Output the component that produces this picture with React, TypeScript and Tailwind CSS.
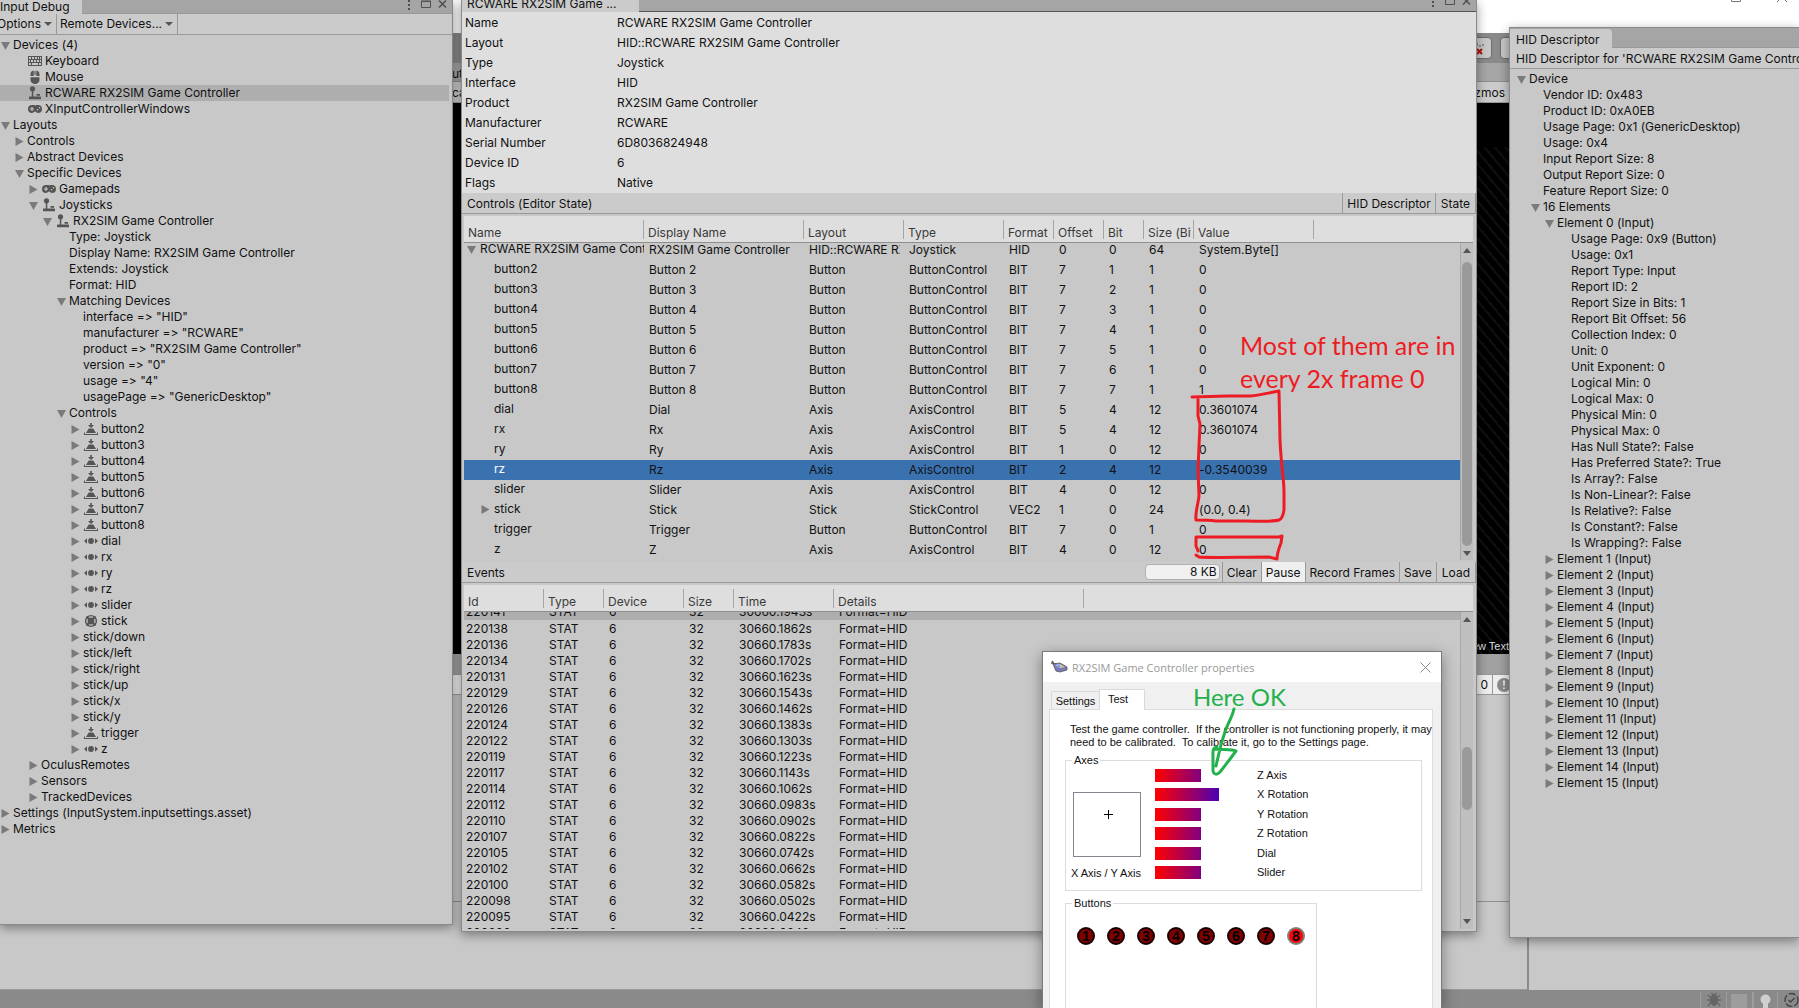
import React from 'react';
import clsx from 'clsx';

type IconName = 'keyboard' | 'mouse' | 'joystick' | 'gamepad' | 'button' | 'axis' | 'stick';

interface TreeItem {
  depth: number;
  label: string;
  fold?: 'open' | 'closed';
  icon?: IconName;
  selected?: boolean;
}

interface Column {
  title: string;
  width: number;
}

const deviceTree: TreeItem[] = [
  { depth: 0, label: 'Devices (4)', fold: 'open' },
  { depth: 1, label: 'Keyboard', icon: 'keyboard' },
  { depth: 1, label: 'Mouse', icon: 'mouse' },
  { depth: 1, label: 'RCWARE RX2SIM Game Controller', icon: 'joystick', selected: true },
  { depth: 1, label: 'XInputControllerWindows', icon: 'gamepad' },
  { depth: 0, label: 'Layouts', fold: 'open' },
  { depth: 1, label: 'Controls', fold: 'closed' },
  { depth: 1, label: 'Abstract Devices', fold: 'closed' },
  { depth: 1, label: 'Specific Devices', fold: 'open' },
  { depth: 2, label: 'Gamepads', fold: 'closed', icon: 'gamepad' },
  { depth: 2, label: 'Joysticks', fold: 'open', icon: 'joystick' },
  { depth: 3, label: 'RX2SIM Game Controller', fold: 'open', icon: 'joystick' },
  { depth: 4, label: 'Type: Joystick' },
  { depth: 4, label: 'Display Name: RX2SIM Game Controller' },
  { depth: 4, label: 'Extends: Joystick' },
  { depth: 4, label: 'Format: HID' },
  { depth: 4, label: 'Matching Devices', fold: 'open' },
  { depth: 5, label: 'interface => "HID"' },
  { depth: 5, label: 'manufacturer => "RCWARE"' },
  { depth: 5, label: 'product => "RX2SIM Game Controller"' },
  { depth: 5, label: 'version => "0"' },
  { depth: 5, label: 'usage => "4"' },
  { depth: 5, label: 'usagePage => "GenericDesktop"' },
  { depth: 4, label: 'Controls', fold: 'open' },
  ...[2, 3, 4, 5, 6, 7, 8].map((n): TreeItem => ({ depth: 5, label: `button${n}`, fold: 'closed', icon: 'button' })),
  ...['dial', 'rx', 'ry', 'rz', 'slider'].map((label): TreeItem => ({ depth: 5, label, fold: 'closed', icon: 'axis' })),
  { depth: 5, label: 'stick', fold: 'closed', icon: 'stick' },
  ...['down', 'left', 'right', 'up', 'x', 'y'].map((d): TreeItem => ({ depth: 5, label: `stick/${d}`, fold: 'closed' })),
  { depth: 5, label: 'trigger', fold: 'closed', icon: 'button' },
  { depth: 5, label: 'z', fold: 'closed', icon: 'axis' },
  { depth: 2, label: 'OculusRemotes', fold: 'closed' },
  { depth: 2, label: 'Sensors', fold: 'closed' },
  { depth: 2, label: 'TrackedDevices', fold: 'closed' },
  { depth: 0, label: 'Settings (InputSystem.inputsettings.asset)', fold: 'closed' },
  { depth: 0, label: 'Metrics', fold: 'closed' },
];

const hidTree: TreeItem[] = [
  { depth: 0, label: 'Device', fold: 'open' },
  ...[
    'Vendor ID: 0x483',
    'Product ID: 0xA0EB',
    'Usage Page: 0x1 (GenericDesktop)',
    'Usage: 0x4',
    'Input Report Size: 8',
    'Output Report Size: 0',
    'Feature Report Size: 0',
  ].map((label): TreeItem => ({ depth: 1, label })),
  { depth: 1, label: '16 Elements', fold: 'open' },
  { depth: 2, label: 'Element 0 (Input)', fold: 'open' },
  ...[
    'Usage Page: 0x9 (Button)',
    'Usage: 0x1',
    'Report Type: Input',
    'Report ID: 2',
    'Report Size in Bits: 1',
    'Report Bit Offset: 56',
    'Collection Index: 0',
    'Unit: 0',
    'Unit Exponent: 0',
    'Logical Min: 0',
    'Logical Max: 0',
    'Physical Min: 0',
    'Physical Max: 0',
    'Has Null State?: False',
    'Has Preferred State?: True',
    'Is Array?: False',
    'Is Non-Linear?: False',
    'Is Relative?: False',
    'Is Constant?: False',
    'Is Wrapping?: False',
  ].map((label): TreeItem => ({ depth: 3, label })),
  ...Array.from({ length: 15 }, (_, i): TreeItem => ({ depth: 2, label: `Element ${i + 1} (Input)`, fold: 'closed' })),
];

const deviceInfo = [
  ['Name', 'RCWARE RX2SIM Game Controller'],
  ['Layout', 'HID::RCWARE RX2SIM Game Controller'],
  ['Type', 'Joystick'],
  ['Interface', 'HID'],
  ['Product', 'RX2SIM Game Controller'],
  ['Manufacturer', 'RCWARE'],
  ['Serial Number', '6D8036824948'],
  ['Device ID', '6'],
  ['Flags', 'Native'],
];

const controlColumns: Column[] = [
  { title: 'Name', width: 180 },
  { title: 'Display Name', width: 160 },
  { title: 'Layout', width: 100 },
  { title: 'Type', width: 100 },
  { title: 'Format', width: 50 },
  { title: 'Offset', width: 50 },
  { title: 'Bit', width: 40 },
  { title: 'Size (Bits)', width: 50 },
  { title: 'Value', width: 120 },
];

const controlRows = [
  ['RCWARE RX2SIM Game Controller', 'RX2SIM Game Controller', 'HID::RCWARE RX2SIM', 'Joystick', 'HID', '0', '0', '64', 'System.Byte[]'],
  ['button2', 'Button 2', 'Button', 'ButtonControl', 'BIT', '7', '1', '1', '0'],
  ['button3', 'Button 3', 'Button', 'ButtonControl', 'BIT', '7', '2', '1', '0'],
  ['button4', 'Button 4', 'Button', 'ButtonControl', 'BIT', '7', '3', '1', '0'],
  ['button5', 'Button 5', 'Button', 'ButtonControl', 'BIT', '7', '4', '1', '0'],
  ['button6', 'Button 6', 'Button', 'ButtonControl', 'BIT', '7', '5', '1', '0'],
  ['button7', 'Button 7', 'Button', 'ButtonControl', 'BIT', '7', '6', '1', '0'],
  ['button8', 'Button 8', 'Button', 'ButtonControl', 'BIT', '7', '7', '1', '1'],
  ['dial', 'Dial', 'Axis', 'AxisControl', 'BIT', '5', '4', '12', '0.3601074'],
  ['rx', 'Rx', 'Axis', 'AxisControl', 'BIT', '5', '4', '12', '0.3601074'],
  ['ry', 'Ry', 'Axis', 'AxisControl', 'BIT', '1', '0', '12', '0'],
  ['rz', 'Rz', 'Axis', 'AxisControl', 'BIT', '2', '4', '12', '-0.3540039'],
  ['slider', 'Slider', 'Axis', 'AxisControl', 'BIT', '4', '0', '12', '0'],
  ['stick', 'Stick', 'Stick', 'StickControl', 'VEC2', '1', '0', '24', '(0.0, 0.4)'],
  ['trigger', 'Trigger', 'Button', 'ButtonControl', 'BIT', '7', '0', '1', '0'],
  ['z', 'Z', 'Axis', 'AxisControl', 'BIT', '4', '0', '12', '0'],
];

const eventColumns: Column[] = [
  { title: 'Id', width: 80 },
  { title: 'Type', width: 60 },
  { title: 'Device', width: 80 },
  { title: 'Size', width: 50 },
  { title: 'Time', width: 100 },
  { title: 'Details', width: 250 },
];

const events = [
  ['220141', '30660.1943s'],
  ['220138', '30660.1862s'],
  ['220136', '30660.1783s'],
  ['220134', '30660.1702s'],
  ['220131', '30660.1623s'],
  ['220129', '30660.1543s'],
  ['220126', '30660.1462s'],
  ['220124', '30660.1383s'],
  ['220122', '30660.1303s'],
  ['220119', '30660.1223s'],
  ['220117', '30660.1143s'],
  ['220114', '30660.1062s'],
  ['220112', '30660.0983s'],
  ['220110', '30660.0902s'],
  ['220107', '30660.0822s'],
  ['220105', '30660.0742s'],
  ['220102', '30660.0662s'],
  ['220100', '30660.0582s'],
  ['220098', '30660.0502s'],
  ['220095', '30660.0422s'],
  ['220093', '30660.0342s'],
];

const axes = [
  { label: 'Z Axis', value: 46 },
  { label: 'X Rotation', value: 64 },
  { label: 'Y Rotation', value: 46 },
  { label: 'Z Rotation', value: 46 },
  { label: 'Dial', value: 46 },
  { label: 'Slider', value: 46 },
];

const RowIcon: React.FC<{ name: IconName }> = ({ name }) => (
  <svg width="14" height="14" viewBox="0 0 14 14" fill="#555" aria-hidden="true">
    {name === 'keyboard' && (
      <g fill="none" stroke="#555">
        <rect x="0.5" y="2.5" width="13" height="9" />
        <path d="M0 5.5h14M0 8.5h14M3.5 3v2.500M6.500 3v2.500M9.500 3v2.500M11.500 3v2.500M2.500 6v2.500M5.500 6v2.500M8.500 6v2.500M11.500 6v2.500M3.500 9v2.500M10.500 9v2.500" />
      </g>
    )}
    {name === 'mouse' && (
      <>
        <path d="M2.500 6V4.500A4 4 0 0 1 5.700 .6V6zM11.500 6V4.500A4 4 0 0 0 8.300 .6V6zM2.500 7.200h9V10a4.500 4 0 0 1-9 0z" />
        <rect x="6.400" y="1" width="1.200" height="4" rx="0.600" />
      </>
    )}
    {name === 'joystick' && (
      <>
        <circle cx="4.500" cy="2.800" r="2.600" />
        <rect x="3.800" y="4" width="1.500" height="7" />
        <rect x="8.500" y="8" width="3.500" height="1.800" />
        <rect x="1" y="10.500" width="12" height="2.800" rx="0.600" />
      </>
    )}
    {name === 'gamepad' && (
      <>
        <path d="M4 3h2.500l.8.800L8 3h2a4 4 0 0 1 0 8c-1.500 0-2-1.500-3-1.500S5.500 11 4 11a4 4 0 0 1 0-8z" />
        <path d="M2 7h4M4 5v4" stroke="#c8c8c8" strokeWidth="1.200" />
        <circle cx="9.500" cy="7.800" r="0.800" fill="#c8c8c8" />
        <circle cx="11.500" cy="5.800" r="0.800" fill="#c8c8c8" />
      </>
    )}
    {name === 'button' && (
      <path d="M6.200 1h1.600v2H10L7 6 4 3h2.200zM4.800 6.500h4.400L12 11H2zM0 10.500h1V12h12v-1.500h1V13H0z" />
    )}
    {name === 'axis' && (
      <>
        <circle cx="7" cy="7" r="2.900" />
        <path d="M0 7l3-2.800v5.600zM14 7l-3-2.800v5.600z" />
      </>
    )}
    {name === 'stick' && (
      <>
        <circle cx="7" cy="7" r="5.400" fill="none" stroke="#555" strokeWidth="1.400" />
        <circle cx="7" cy="7" r="3.400" />
        <path d="M2.500 2.500l3 3M11.500 2.500l-3 3M2.500 11.500l3-3M11.500 11.500l-3-3" stroke="#555" strokeWidth="2" />
      </>
    )}
  </svg>
);

const Foldout: React.FC<{ state: 'open' | 'closed'; label: string }> = ({ state, label }) => (
  <button type="button" aria-label={label} aria-expanded={state === 'open'} className="flex size-[11px] shrink-0 items-center">
    <svg width="9" height="9" viewBox="0 0 9 9" fill="#7a7a7a" className="-ml-px" aria-hidden="true">
      {state === 'open' ? <path d="M0 1h9L4.500 9z" /> : <path d="M0.500 0v9L8.500 4.500z" />}
    </svg>
  </button>
);

const Tree: React.FC<{ items: TreeItem[] }> = ({ items }) => (
  <ul className="pt-0.5">
    {items.map((item, i) => (
      <li
        key={i}
        className={clsx('flex h-4 items-center whitespace-nowrap pl-0.5', item.selected && 'mr-[3px] bg-[#aeaeae]')}
      >
        <span style={{ width: item.depth * 14 }} className="shrink-0" />
        {item.fold ? <Foldout state={item.fold} label={item.label} /> : <span className="w-[11px] shrink-0" />}
        {item.icon && (
          <span className="mr-[3px] ml-px shrink-0">
            <RowIcon name={item.icon} />
          </span>
        )}
        {item.label}
      </li>
    ))}
  </ul>
);

const WindowButtons: React.FC = () => (
  <div className="ml-auto flex items-center text-[#505050]">
    <button type="button" aria-label="Menu" className="mr-2.5">
      <svg width="4" height="12" fill="currentColor">
        <path d="M1 0h2v2H1zM1 4h2v2H1zM1 8h2v2H1z" />
      </svg>
    </button>
    <button type="button" aria-label="Maximize" className="mr-[7px]">
      <svg width="10" height="12" fill="none" stroke="currentColor">
        <path d="M.5 1.500h9v6h-9z" />
        <path d="M0 1h10" />
      </svg>
    </button>
    <button type="button" aria-label="Close">
      <svg width="9" height="12" fill="none" stroke="currentColor" strokeWidth="1.500">
        <path d="M1 .5l7 7M8 .5l-7 7" />
      </svg>
    </button>
  </div>
);

const HeaderRow: React.FC<{ columns: Column[] }> = ({ columns }) => (
  <thead>
    <tr className="bg-[#dedede]">
      {columns.map(col => (
        <th key={col.title} className="h-[27px] border-b border-[#8f8f8f] p-0 text-left align-top font-normal text-[#3a3a3a]">
          <div className="mt-1 h-[19px] border-r border-[#a5a5a5] pr-0.5 pl-1 whitespace-nowrap">
            <div className="overflow-hidden pt-[5px] leading-4">{col.title}</div>
          </div>
        </th>
      ))}
      <td className="border-b border-[#8f8f8f]" />
    </tr>
  </thead>
);

const ColumnWidths: React.FC<{ columns: Column[] }> = ({ columns }) => (
  <colgroup>
    {columns.map(col => (
      <col key={col.title} style={{ width: col.width }} />
    ))}
    <col />
  </colgroup>
);

const Scrollbar: React.FC<{ children: React.ReactNode }> = ({ children }) => (
  <div className="absolute top-[27px] right-0 bottom-0 flex w-[13px] flex-col items-center border-l border-[#a8a8a8] bg-[#bfbfbf]">
    <svg width="8" height="5" className="my-[5px] shrink-0" fill="#555">
      <path d="M0 5h8L4 0z" />
    </svg>
    <div className="relative w-full flex-1">{children}</div>
    <svg width="8" height="5" className="my-[5px] shrink-0" fill="#555">
      <path d="M0 0h8L4 5z" />
    </svg>
  </div>
);

const ToolbarButton: React.FC<{ children: React.ReactNode; pressed?: boolean }> = ({ children, pressed }) => (
  <button
    type="button"
    className={clsx(
      'h-5 border-l border-[#999] px-1 pt-px whitespace-nowrap last:border-r last:px-[5px]',
      pressed && 'bg-[#efefef]'
    )}
  >
    {children}
  </button>
);

/* Main editor behind the floating windows */
const EditorBackdrop: React.FC = () => (
  <div className="flex h-full flex-col bg-[#8a8a8a]">
    <div className="flex h-[33px] items-start justify-end gap-9 bg-white pr-3">
      <svg width="10" height="3" fill="none" stroke="#777">
        <path d="M.5 0v1.500h9V0" />
      </svg>
      <svg width="10" height="3" fill="none" stroke="#777">
        <path d="M0 2l3-3M10 2L7-1" />
      </svg>
    </div>
    <div className="flex h-[30px] items-center justify-end gap-2 pr-[275px]">
      <button type="button" aria-label="Collab" className="flex h-[22px] w-8 items-end justify-center rounded-sm border border-[#6d6d6d] bg-[#c8c8c8]">
        <svg width="16" height="18" fill="none">
          <path d="M9 3v3M12 5v2M15 4v2" stroke="#555" />
          <path d="M9 9l5 5M14 9l-5 5" stroke="#b01010" strokeWidth="2" />
        </svg>
      </button>
      <button type="button" aria-label="Services" className="h-[22px] w-6 rounded-sm border border-[#6d6d6d] bg-[#c8c8c8]" />
    </div>
    <div className="h-[19px] border-b border-[#8f8f8f] bg-[#a5a5a5] pt-px pl-[452px] leading-5">ut</div>
    <div className="flex h-[21px] items-center justify-between border-b border-[#999] bg-[#cbcbcb] pt-0.5 pr-[294px] pl-[452px]">
      <span>ca</span>
      <span>Gizmos</span>
    </div>
    <div className="flex min-h-0 flex-1 bg-[#c8c8c8]">
      <div className="flex min-w-0 flex-1 flex-col border-r-2 border-[#8a8a8a]">
        <div className="flex h-[551px] flex-col bg-black">
          <div className="mt-11 ml-[470px] flex flex-1 items-end justify-end bg-[repeating-linear-gradient(50deg,#000_0,#000_5px,#0c0c0c_6px,#111_8px)] pr-[18px] font-['Liberation_Sans'] text-[11px] text-[#ddd]">
            <span>New Text</span>
          </div>
        </div>
        <div className="h-5 bg-[#a0a0a0]" />
        <div className="flex h-[21px] justify-end border-y border-[#999] bg-[#ededed]">
          <span className="border-r border-[#999] px-1 leading-5">0</span>
          <span className="flex w-[34px] items-center pl-1">
            <svg width="14" height="14">
              <circle cx="7" cy="7" r="7" fill="#8a8a8a" />
              <path d="M6 2.500h2L7.600 8H6.400zM6.200 9.500h1.600V11H6.200z" fill="#eee" />
            </svg>
          </span>
        </div>
        <div className="h-[207px] border-b border-[#8f8f8f]" />
        <div className="flex-1 border-b border-[#999]" />
      </div>
      <div className="w-[270px]" />
    </div>
    <div className="flex h-[18px] justify-end bg-[#8a8a8a] pt-0.5">
      <span className="w-[26px] border-l border-[#9d9d9d] pl-1.5">
        <svg width="14" height="15" fill="none" stroke="#666">
          <ellipse cx="7" cy="8" rx="3.500" ry="5.500" fill="#666" />
          <path d="M1 3l3 3M13 3l-3 3M0 8h14M1 14l3-4M13 14l-3-4M4.500 1L6 3M9.500 1L8 3" strokeWidth="1.300" />
        </svg>
      </span>
      <span className="w-[26px] border-l border-[#9d9d9d] pl-1">
        <span className="mt-0.5 block size-4 bg-[#9d9d9d]" />
      </span>
      <span className="w-[25px] border-l-2 border-[#9d9d9d] pl-1.5">
        <svg width="11" height="15" fill="#cfcfcf" className="mt-0.5">
          <circle cx="5.500" cy="5.500" r="5" />
          <path d="M3 9h5v5H3z" />
        </svg>
      </span>
      <span className="w-[22px] border-l border-[#9d9d9d] pl-1.5">
        <svg width="15" height="15" fill="none" stroke="#444" strokeWidth="1.400">
          <circle cx="7.500" cy="8" r="6.500" strokeDasharray="7 2" />
          <path d="M4.500 8l2 2 4-4" />
        </svg>
      </span>
    </div>
  </div>
);

const InputDebugWindow: React.FC = () => (
  <section className="absolute top-0 bottom-[83px] left-0 flex w-[453px] flex-col border-r border-b border-[#8a8a8a] bg-[#c8c8c8] shadow-[0_3px_10px_rgba(0,0,0,0.4)]">
    <div className="flex h-3.5 items-start border-b border-[#999] bg-[#a5a5a5] pr-[5px]">
      <h2 className="h-3.5 w-[82px] bg-[#cbcbcb] leading-[13px]">Input Debug</h2>
      <WindowButtons />
    </div>
    <div className="flex h-[21px] items-center border-b border-[#999] bg-[#cbcbcb]">
      <button type="button" className="-ml-[3px] flex h-5 items-center gap-[3px] border-r border-[#999] pr-1">
        Options
        <svg width="8" height="4" fill="#555">
          <path d="M0 0h8L4 4z" />
        </svg>
      </button>
      <button type="button" className="flex h-5 items-center gap-[3px] border-r border-[#999] pr-1 pl-[3px]">
        Remote Devices...
        <svg width="8" height="4" fill="#555">
          <path d="M0 0h8L4 4z" />
        </svg>
      </button>
    </div>
    <Tree items={deviceTree} />
  </section>
);

const ControllerWindow: React.FC = () => (
  <section className="absolute top-0 bottom-[76px] left-[461px] flex w-[1016px] flex-col border-x border-b border-[#8a8a8a] bg-[#c8c8c8] shadow-[0_3px_10px_rgba(0,0,0,0.4)]">
    <div className="flex h-3 shrink-0 items-start border-b border-[#555] bg-[#a5a5a5] pr-[5px]">
      <h2 className="h-3 w-[177px] bg-[#cbcbcb] pl-[5px] leading-[7px]">RCWARE RX2SIM Game ...</h2>
      <div className="-mt-[3px] ml-auto">
        <WindowButtons />
      </div>
    </div>
    <dl className="h-[181px] shrink-0 bg-[#dedede] pt-px pl-[3px] leading-5">
      {deviceInfo.map(([label, value]) => (
        <div key={label} className="flex">
          <dt className="w-[152px]">{label}</dt>
          <dd>{value}</dd>
        </div>
      ))}
    </dl>
    <div className="flex h-[21px] shrink-0 items-center border-b border-[#999] bg-[#cbcbcb]">
      <h3 className="mr-auto pt-px pl-[5px]">Controls (Editor State)</h3>
      <ToolbarButton>HID Descriptor</ToolbarButton>
      <ToolbarButton>State</ToolbarButton>
    </div>
    <div className="relative mt-0.5 mr-[3px] mb-0.5 ml-0.5 h-[344px] shrink-0 overflow-hidden">
      <table className="w-full table-fixed border-separate border-spacing-0">
        <ColumnWidths columns={controlColumns} />
        <HeaderRow columns={controlColumns} />
        <tbody>
          {controlRows.map((row, i) => {
            const selected = row[0] === 'rz';
            return (
              <tr key={row[0]} className={clsx(selected && 'bg-[#3a72b0]')}>
                {row.map((cell, c) => (
                  <td key={c} className="p-0">
                    {/* first row is partly scrolled under the header */}
                    <div className={clsx('flex flex-col justify-end overflow-hidden', i === 0 ? 'h-[17px]' : 'h-5')}>
                      {c === 0 ? (
                        <div className={clsx('flex h-5 shrink-0 items-center pb-0.5 whitespace-nowrap', i === 0 ? 'pl-1' : 'pl-[18px]', selected && 'text-white')}>
                          {i === 0 || cell === 'stick' ? (
                            <Foldout state={i === 0 ? 'open' : 'closed'} label={cell} />
                          ) : (
                            <span className="w-[11px]" />
                          )}
                          <span className="ml-px w-0 flex-1 overflow-hidden">{cell}</span>
                        </div>
                      ) : (
                        <div className="mr-1 ml-[5px] h-5 shrink-0 overflow-hidden leading-5 whitespace-nowrap">{cell}</div>
                      )}
                    </div>
                  </td>
                ))}
                <td />
              </tr>
            );
          })}
        </tbody>
      </table>
      <Scrollbar>
        <div className="mx-px mt-1 h-[284px] rounded-full bg-[#9a9a9a]" />
      </Scrollbar>
    </div>
    <div className="flex h-[21px] shrink-0 items-center border-b border-[#999] bg-[#cbcbcb]">
      <h3 className="mr-auto pt-px pl-[5px]">Events</h3>
      <input
        aria-label="Event buffer size"
        defaultValue="8 KB"
        className="mr-0.5 h-4 w-[75px] rounded-sm border border-[#b0b0b0] bg-[#f0f0f0] px-0.5 text-right"
      />
      <ToolbarButton>Clear</ToolbarButton>
      <ToolbarButton pressed>Pause</ToolbarButton>
      <ToolbarButton>Record Frames</ToolbarButton>
      <ToolbarButton>Save</ToolbarButton>
      <ToolbarButton>Load</ToolbarButton>
    </div>
    <div className="relative mt-0.5 mr-[3px] mb-0.5 ml-0.5 min-h-0 flex-1 overflow-hidden">
      <table className="w-full table-fixed border-separate border-spacing-0">
        <ColumnWidths columns={eventColumns} />
        <HeaderRow columns={eventColumns} />
        <tbody>
          {events.map(([id, time], i) => (
            <tr key={id} className={clsx(i === 0 && 'bg-[#aeaeae]')}>
              {[id, 'STAT', '6', '32', time, 'Format=HID'].map((cell, c) => (
                <td key={c} className={clsx('p-0', c === 0 ? 'pl-0.5' : 'pl-[5px]')}>
                  <div className={clsx('overflow-hidden', i === 0 ? 'flex h-2 flex-col justify-end' : 'h-4 leading-[18px]')}>
                    {cell}
                  </div>
                </td>
              ))}
              <td />
            </tr>
          ))}
        </tbody>
      </table>
      <Scrollbar>
        <div className="mx-px mt-[120px] h-[63px] rounded-full bg-[#9a9a9a]" />
      </Scrollbar>
    </div>
  </section>
);

const HidDescriptorWindow: React.FC = () => (
  <section className="absolute top-[27px] right-0 bottom-[70px] left-[1509px] overflow-hidden border border-r-0 border-[#8a8a8a] bg-[#c8c8c8] shadow-[0_3px_10px_rgba(0,0,0,0.4)]">
    <div className="h-5 border-b border-[#999] bg-[#a5a5a5] pt-px">
      <h2 className="h-[19px] w-[102px] rounded-tr-sm bg-[#cbcbcb] pl-1.5 leading-[22px]">HID Descriptor</h2>
    </div>
    <p className="h-[21px] border-b border-[#999] bg-[#cbcbcb] pl-1.5 leading-[22px] whitespace-nowrap">
      HID Descriptor for 'RCWARE RX2SIM Game Controller'
    </p>
    <div className="pl-1.5">
      <Tree items={hidTree} />
    </div>
  </section>
);

const PropertiesDialog: React.FC = () => (
  <section className="absolute top-[651px] bottom-0 left-[1042px] flex w-[400px] flex-col border border-b-0 border-[#7a7a7a] bg-[#f0f0f0] font-['Liberation_Sans'] text-[11px] leading-[13px] shadow-[0_4px_14px_rgba(0,0,0,0.4)]">
    <div className="flex h-[30px] shrink-0 items-center bg-white pr-2.5 pl-2">
      <svg width="17" height="14" viewBox="0 0 17 14" aria-hidden="true">
        <path d="M1 1l2 3M0 3l5 1" stroke="#666" strokeWidth="1.500" />
        <path d="M2 4l7-1 7 4v3l-7 2-4-1z" fill="#7a7ab8" stroke="#555" strokeWidth="0.800" />
        <path d="M4 5l5-1 5 3-5 1z" fill="#b9bdf0" />
        <circle cx="11" cy="6.500" r="1.200" fill="#e0c040" />
        <circle cx="8" cy="6" r="1" fill="#4aa3e0" />
      </svg>
      <h2 className="mr-auto pl-1 font-['Open_Sans'] text-[#999]">RX2SIM Game Controller properties</h2>
      <button type="button" aria-label="Close">
        <svg width="11" height="11" fill="none" stroke="#888">
          <path d="M.5.5l10 10M10.500.5l-10 10" />
        </svg>
      </button>
    </div>
    <div role="tablist" className="flex items-end pt-[7px] pl-2">
      <button type="button" role="tab" className="h-[18px] w-12 border border-r-0 border-b-0 border-[#d9d9d9] pt-0.5">
        Settings
      </button>
      <button type="button" role="tab" aria-selected="true" className="relative -mb-px flex h-[21px] w-[46px] border border-b-0 border-[#d9d9d9] bg-white pt-[3px] pl-2">
        Test
      </button>
    </div>
    <div className="ml-1.5 w-[384px] flex-1 border border-b-0 border-[#dcdcdc] bg-white px-[15px] pt-[13px]">
      <p className="pl-[5px] whitespace-pre">
        {'Test the game controller.  If the controller is not functioning properly, it may\nneed to be calibrated.  To calibrate it, go to the Settings page.'}
      </p>
      <fieldset className="mt-[5px] flex h-[137px] w-[357px] border border-[#dcdcdc]">
        <legend className="ml-1.5 px-0.5">Axes</legend>
        <div className="w-[89px] pt-[25px] pl-[7px]">
          <svg width="68" height="65" className="block">
            <rect x="0.500" y="0.500" width="67" height="64" fill="none" stroke="#828790" />
            <path d="M31 22.500h9M35.500 18v9" stroke="#000" />
          </svg>
          <div className="-ml-0.5 pt-2.5 whitespace-nowrap">X Axis / Y Axis</div>
        </div>
        <ul className="flex h-[112px] flex-col justify-between pt-0.5">
          {axes.map(axis => (
            <li key={axis.label} className="flex h-[13px]">
              <span className="mr-3 w-[90px]">
                <span
                  style={{ width: axis.value }}
                  className="block h-[13px] bg-[linear-gradient(to_right,#f00_0,#800080_46px,#4b00b4_64px)]"
                />
              </span>
              {axis.label}
            </li>
          ))}
        </ul>
      </fieldset>
      <fieldset className="mt-1.5 h-[130px] w-[252px] border border-b-0 border-[#dcdcdc]">
        <legend className="ml-1.5 px-0.5">Buttons</legend>
        <ul className="flex gap-3 pt-[17px] pl-[11px]">
          {[1, 2, 3, 4, 5, 6, 7, 8].map(n => (
            <li
              key={n}
              className={clsx(
                'flex size-[18px] items-center justify-center rounded-full border-2 text-sm font-bold text-black',
                n === 8 ? 'border-[#808080] bg-[#f00]' : 'border-[#1a0000] bg-[#800000]'
              )}
            >
              {n}
            </li>
          ))}
        </ul>
      </fieldset>
    </div>
  </section>
);

/* Freehand notes drawn over the windows */
const Annotations: React.FC = () => (
  <div className="pointer-events-none absolute inset-0 font-['Lato']">
    <svg className="absolute inset-0 size-full" fill="none" strokeWidth="3" strokeLinecap="round" strokeLinejoin="round">
      <g stroke="#ed1c24">
        <path d="M1192 397L1228 396 1250 396C1262 395 1268 393 1279 391L1280 440C1281 465 1284 478 1284 492V510C1283 516 1282 519 1279 520C1272 522 1260 521 1245 521H1216C1208 520 1200 520 1196 520C1195 512 1198 505 1199 496L1198 470 1199 446 1200 424 1198 416V399" />
        <path d="M1198 551L1196 546V537H1279L1282 536 1281 543C1279 548 1277 553 1277 559L1269 557C1240 557 1210 558 1199 557L1196 555" />
      </g>
      <path d="M1234 709C1232 718 1228 723 1226 729C1223 737 1221 744 1219 753L1216 766M1217 747C1212 748 1213 752 1213 758V771C1214 775 1217 775 1220 772C1224 767 1227 763 1230 759L1236 751C1232 749 1222 750 1214 749" stroke="#22b14c" />
    </svg>
    <p className="absolute top-[329px] left-[1240px] text-[25px] leading-[33px] whitespace-pre text-[#ed1c24]">{'Most of them are in\nevery 2x frame 0'}</p>
    <p className="absolute top-[680px] left-[1193px] text-2xl leading-[33px] text-[#22b14c]">Here OK</p>
  </div>
);

const App: React.FC = () => {
  return (
    <main className="relative h-screen overflow-hidden font-['Inter',sans-serif] text-xs text-[#111] [font-feature-settings:'calt'_0]">
      <EditorBackdrop />
      <InputDebugWindow />
      <HidDescriptorWindow />
      <ControllerWindow />
      <PropertiesDialog />
      <Annotations />
    </main>
  );
};

export default App;
